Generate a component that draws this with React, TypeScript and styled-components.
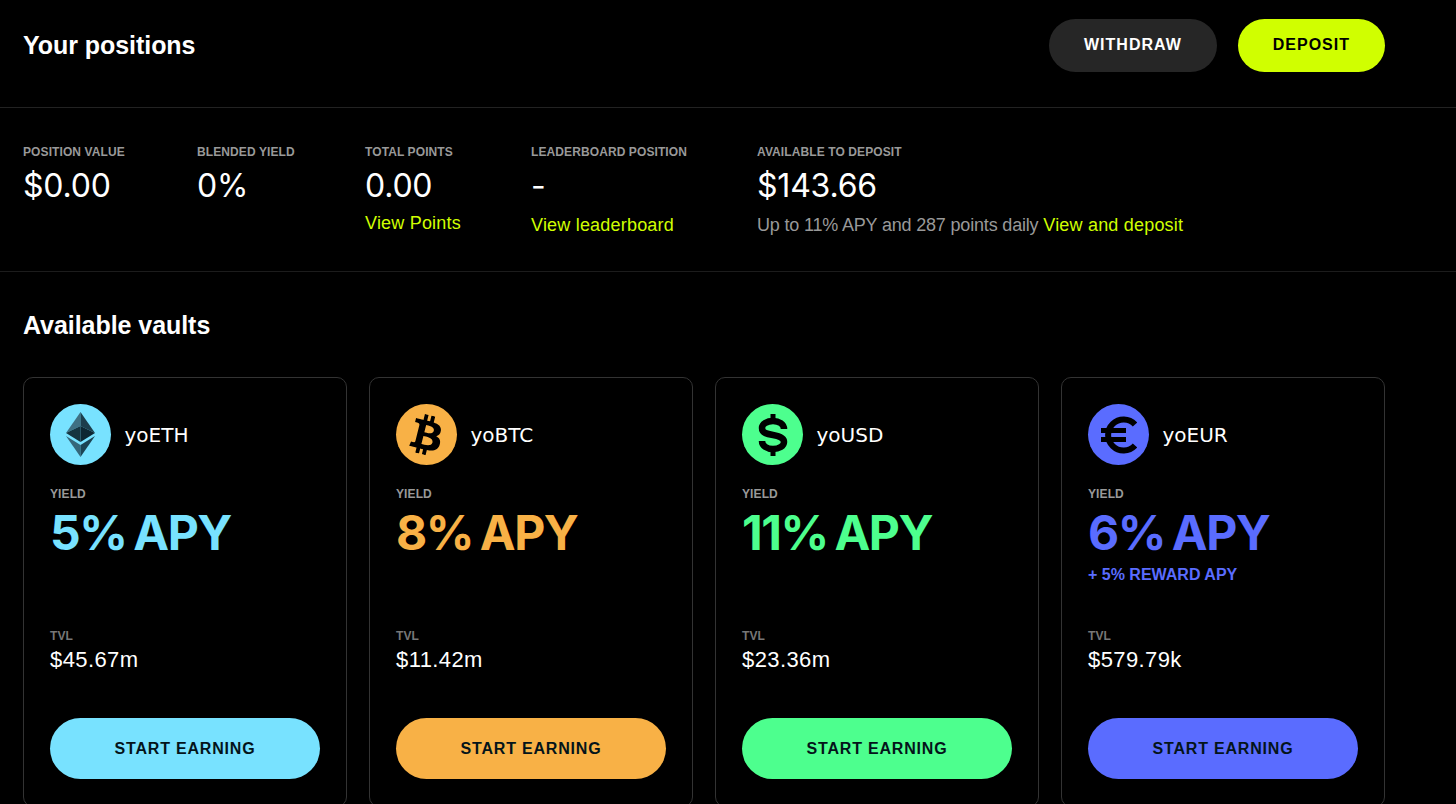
/**
 * @name Vaults
 * @description positions summary and vault cards
 */
import React from 'react'
import styled, {createGlobalStyle} from 'styled-components'
import {FaBtc} from 'react-icons/fa'

const SANS = `'Liberation Sans', Arial, sans-serif`
const DISPLAY = `Inter, 'Liberation Sans', sans-serif`
const LIME = '#d0ff00'

const GlobalStyle = createGlobalStyle`
  html, body {
    margin: 0;
    padding: 0;
    height: 804px;
    overflow: hidden;
    background: #000;
  }
`

const EthIcon = () => (
  <svg width="29" height="45" viewBox="0 0 29 45">
    <polygon points="14.5,0 14.5,14 0,21" fill="#3f7083" />
    <polygon points="14.5,0 29,21 14.5,14" fill="#1c3e4c" />
    <polygon points="0,21 14.5,14 14.5,30" fill="#163440" />
    <polygon points="29,21 14.5,14 14.5,30" fill="#0e2732" />
    <polygon points="0,24 14.5,33 14.5,45" fill="#35677a" />
    <polygon points="29,24 14.5,33 14.5,45" fill="#1b4454" />
  </svg>
)

const DollarIcon = () => (
  <svg width="30" height="42" viewBox="0 0 30 42" fill="none" stroke="#000">
    <path d="M15 0v7M15 35v7" strokeWidth="5" />
    <path
      d="M26 15C26 10 21 7 15 7C9 7 4 10 4 14C4 19 9 20 15 21C21 22 26 23.500 26 28C26 32 21 35 15 35C9 35 4 32 4 27"
      strokeWidth="6.5"
    />
  </svg>
)

const EuroIcon = () => (
  <svg width="36" height="38" viewBox="0 0 36 38" fill="none" stroke="#000">
    <path d="M34 8.500A15.500 15.500 0 1 0 34 29.500" strokeWidth="6" />
    <path d="M0 14.500H25M0 23.500H25" strokeWidth="5" />
  </svg>
)

const VAULTS = [
  {name: 'yoETH', color: '#78e2ff', apy: '5% APY', tvl: '$45.67m', icon: <EthIcon />},
  {
    name: 'yoBTC',
    color: '#f8b146',
    apy: '8% APY',
    tvl: '$11.42m',
    icon: <FaBtc size={40} style={{transform: 'rotate(14deg)'}} />,
  },
  {name: 'yoUSD', color: '#4dff8e', apy: '11% APY', tvl: '$23.36m', icon: <DollarIcon />},
  {
    name: 'yoEUR',
    color: '#5a6cff',
    apy: '6% APY',
    reward: '+ 5% REWARD APY',
    tvl: '$579.79k',
    icon: <EuroIcon />,
  },
]

const STATS = [
  {label: 'POSITION VALUE', value: '$0.00'},
  {label: 'BLENDED YIELD', value: '0%'},
  {label: 'TOTAL POINTS', value: '0.00', link: 'View Points', tight: true},
  {label: 'LEADERBOARD POSITION', value: '-', link: 'View leaderboard'},
  {
    label: 'AVAILABLE TO DEPOSIT',
    value: '$143.66',
    note: 'Up to 11% APY and 287 points daily',
    link: 'View and deposit',
  },
]

export default function App() {
  return (
    <Page>
      <GlobalStyle />
      {/* header */}
      <Header>
        <Title>Your positions</Title>
        <Actions>
          <PillButton $bg="#262626" $fg="#fff">WITHDRAW</PillButton>
          <PillButton $bg={LIME} $fg="#000">DEPOSIT</PillButton>
        </Actions>
      </Header>
      {/* stats */}
      <Stats>
        {STATS.map(stat => (
          <Stat key={stat.label}>
            <Label>{stat.label}</Label>
            <StatValue>{stat.value}</StatValue>
            {stat.link && (
              <StatNote $tight={stat.tight}>
                {stat.note && `${stat.note} `}
                <Link>{stat.link}</Link>
              </StatNote>
            )}
          </Stat>
        ))}
      </Stats>
      {/* vaults */}
      <Vaults>
        <Title>Available vaults</Title>
        <Grid>
          {VAULTS.map(vault => (
            <Card key={vault.name}>
              <CardHead>
                <Coin $color={vault.color}>{vault.icon}</Coin>
                <CoinName>{vault.name}</CoinName>
              </CardHead>
              <Label>YIELD</Label>
              <Apy $color={vault.color}>{vault.apy}</Apy>
              <Reward $color={vault.color}>{vault.reward}</Reward>
              <Label $dim>TVL</Label>
              <Tvl>{vault.tvl}</Tvl>
              <StartButton $color={vault.color}>START EARNING</StartButton>
            </Card>
          ))}
        </Grid>
      </Vaults>
    </Page>
  )
}
// * --------------------------------------------------*
const Page = styled.div`
  width: 1456px;
  background: #000;
  color: #fff;
  font-family: ${SANS};
`
const Header = styled.header`
  display: flex;
  align-items: center;
  justify-content: space-between;
  box-sizing: border-box;
  height: 108px;
  padding: 0 71px 17px 23px;
  border-bottom: 1px solid #222;
`
const Title = styled.h2`
  margin: 0;
  font-size: 25px;
  line-height: 30px;
  font-weight: 700;
  letter-spacing: -0.05px;
`
const Actions = styled.div`
  display: flex;
  gap: 21px;
`
const PillButton = styled.button<{$bg: string; $fg: string}>`
  height: 53px;
  padding: 0 35px;
  border: 0;
  border-radius: 27px;
  background: ${p => p.$bg};
  color: ${p => p.$fg};
  font-family: ${SANS};
  font-size: 16px;
  font-weight: 700;
  letter-spacing: 1px;
`
const Stats = styled.section`
  display: grid;
  grid-template-columns: 104px 98px 96px 156px auto;
  column-gap: 70px;
  box-sizing: border-box;
  height: 164px;
  padding: 37px 23px 0;
  border-bottom: 1px solid #1c1c1c;
`
const Stat = styled.div`
  display: flex;
  flex-direction: column;
`
const Label = styled.div<{$dim?: boolean}>`
  font-size: 12px;
  line-height: 14px;
  font-weight: 700;
  letter-spacing: 0.1px;
  white-space: nowrap;
  color: ${p => (p.$dim ? '#777' : '#999')};
`
const StatValue = styled.div`
  margin-top: 7px;
  font-family: ${DISPLAY};
  font-size: 32px;
  line-height: 40px;
  letter-spacing: -0.2px;
`
const StatNote = styled.div<{$tight?: boolean}>`
  margin-top: ${p => (p.$tight ? '5px' : '7px')};
  font-size: 18px;
  line-height: 24px;
  letter-spacing: -0.18px;
  color: #999;
  white-space: nowrap;
`
const Link = styled.span`
  color: ${LIME};
  letter-spacing: 0.2px;
`
const Vaults = styled.section`
  padding: 38px 71px 0 23px;
`
const Grid = styled.div`
  display: grid;
  grid-template-columns: repeat(4, 324px);
  gap: 22px;
  margin-top: 37px;
`
const Card = styled.article`
  display: flex;
  flex-direction: column;
  box-sizing: border-box;
  height: 430px;
  padding: 26px 26px 0;
  border: 1px solid #333;
  border-radius: 10px;
`
const CardHead = styled.div`
  display: flex;
  align-items: center;
  gap: 13.5px;
  margin-bottom: 22px;
`
const Coin = styled.div<{$color: string}>`
  display: flex;
  align-items: center;
  justify-content: center;
  width: 61px;
  height: 61px;
  border-radius: 50%;
  background: ${p => p.$color};
  color: #000;
`
const CoinName = styled.div`
  font-family: 'DejaVu Sans', sans-serif;
  font-size: 20px;
`
const Apy = styled.div<{$color: string}>`
  margin-top: 4px;
  font-family: ${DISPLAY};
  font-size: 48px;
  line-height: 56px;
  font-weight: 700;
  letter-spacing: -1.5px;
  word-spacing: -3px;
  color: ${p => p.$color};
`
const Reward = styled.div<{$color: string}>`
  height: 20px;
  margin: 4px 0 44px;
  font-size: 16px;
  line-height: 20px;
  font-weight: 700;
  color: ${p => p.$color};
`
const Tvl = styled.div`
  margin-top: 3px;
  font-size: 22px;
  line-height: 28px;
  letter-spacing: 0.4px;
`
const StartButton = styled.button<{$color: string}>`
  width: 270px;
  height: 61px;
  margin-top: 44px;
  border: 0;
  border-radius: 31px;
  background: ${p => p.$color};
  color: #04141a;
  font-family: ${SANS};
  font-size: 16px;
  font-weight: 700;
  letter-spacing: 0.8px;
`
